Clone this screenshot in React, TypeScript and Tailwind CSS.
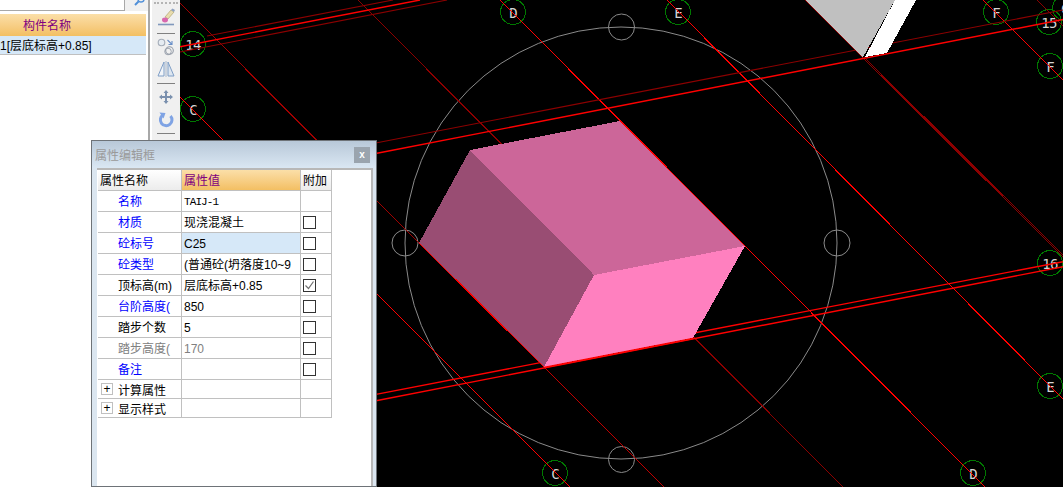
import React from "react";

const cjk = "[font-family:'Liberation_Sans','Noto_Sans_CJK_SC',sans-serif]";

type Row = { name: string; value?: React.ReactNode; color: string; valueClass?: string; check?: "none" | "empty" | "checked"; selected?: boolean };

const rows: Row[] = [
  { name: "名称", value: "TAIJ-1", color: "text-[#0000ff]", valueClass: "[font-family:'Liberation_Mono',monospace] text-[11px] tracking-[-0.9px]", check: "none" },
  { name: "材质", value: "现浇混凝土", color: "text-[#0000ff]", check: "empty" },
  { name: "砼标号", value: "C25", color: "text-[#0000ff]", check: "empty", selected: true },
  { name: "砼类型", value: "(普通砼(坍落度10~9", color: "text-[#0000ff]", check: "empty" },
  { name: "顶标高(m)", value: "层底标高+0.85", color: "text-black", check: "checked" },
  { name: "台阶高度(", value: "850", color: "text-[#0000ff]", check: "empty" },
  { name: "踏步个数", value: "5", color: "text-black", check: "empty" },
  { name: "踏步高度(", value: "170", color: "text-[#808080]", valueClass: "text-[#808080]", check: "empty" },
  { name: "备注", value: "", color: "text-[#0000ff]", check: "empty" },
];

function Check({ on }: { on?: boolean }) {
  return (
    <span className="ml-[2px] flex h-[13px] w-[13px] items-center justify-center border border-[#333333] bg-white">
      {on && (
        <svg width="11" height="11" viewBox="0 0 11 11">
          <path d="M1.5 5.5 L4.5 8.5 L9.5 1.5" fill="none" stroke="#707070" strokeWidth="1.2" />
        </svg>
      )}
    </span>
  );
}

function Labels() {
  const items: [number, number, string][] = [
    [193, 44, "14"],
    [193, 109, "C"],
    [513, 12, "D"],
    [678, 12, "E"],
    [996, 12, "F"],
    [1065, 8, "G"],
    [1049, 22, "15"],
    [1050, 66, "F"],
    [1050, 263, "16"],
    [1050, 386, "E"],
    [973, 473, "D"],
    [555, 473, "C"],
  ];
  return (
    <>
      {items.map(([x, y, t]) => (
        <g key={t + x}>
          <circle cx={x} cy={y} r="12.5" fill="none" stroke="#007800" strokeWidth="1" />
          <text x={x} y={y + 5.5} textAnchor="middle" fontFamily="'DejaVu Sans Mono', monospace" fontSize="14" letterSpacing="-0.8" fill="#d4d4d4">
            {t}
          </text>
        </g>
      ))}
    </>
  );
}

function Canvas() {
  const bright = "#ff0000";
  const dark = "#8c0000";
  return (
    <svg className="block h-full w-full bg-black" viewBox="180 0 883 487" shapeRendering="crispEdges">
      <Labels />
      {/* work circle */}
      <g fill="none" stroke="#8a8a8a" strokeWidth="1" shapeRendering="auto">
        <circle cx="621" cy="243" r="216" />
        <circle cx="621.5" cy="27" r="13" />
        <circle cx="405" cy="243" r="13" />
        <circle cx="837" cy="243" r="13" />
        <circle cx="621.5" cy="459.5" r="13" />
      </g>
      {/* descending grid lines */}
      <line x1="177" y1="0" x2="419" y2="243" stroke="#a00000" />
      <line x1="544" y1="367" x2="664" y2="487" stroke="#c00000" />
      <line x1="358" y1="0" x2="843" y2="487" stroke={dark} />
      <line x1="500" y1="0" x2="985" y2="487" stroke={bright} />
      <line x1="667" y1="0" x2="1063" y2="399" stroke={bright} />
      <line x1="180" y1="97" x2="570" y2="487" stroke={bright} />
      <line x1="983" y1="0" x2="1063" y2="80" stroke={bright} />
      <line x1="1037" y1="0" x2="1063" y2="26" stroke={dark} />
      <line x1="805" y1="0" x2="1063" y2="257" stroke={dark} />
      <line x1="864" y1="57" x2="1063" y2="255" stroke={dark} />
      {/* rising grid lines */}
      <g shapeRendering="auto" stroke={dark} strokeWidth="1.1">
        <line x1="207" y1="36" x2="393" y2="0" />
        <line x1="180" y1="52" x2="447" y2="0" />
        <line x1="377" y1="142.7" x2="1063" y2="10" />
      </g>
      <g shapeRendering="auto" stroke={bright} strokeWidth="1.4">
        <line x1="180" y1="46.7" x2="420" y2="0" />
        <line x1="377" y1="153.3" x2="1063" y2="19.5" />
        <line x1="376" y1="394.4" x2="1063" y2="261.7" />
        <line x1="376" y1="400.8" x2="1063" y2="266.7" />
      </g>
      {/* wedge */}
      <polygon points="805,0 895,0 863,57" fill="#c0c0c0" />
      <polygon points="895,0 916,0 887,53 865,57" fill="#ffffff" />
      {/* pink solid */}
      <polygon points="470,150 620,121 745,246 594,275" fill="#cc6699" />
      <polygon points="470,150 594,275 544,367 419,243" fill="#994d73" />
      <polygon points="594,275 745,246 693,338 544,367" fill="#ff80bf" />
      <line x1="620" y1="121" x2="745" y2="246" stroke={bright} />
      <line x1="419" y1="243" x2="544" y2="367" stroke={bright} />
      <line x1="544" y1="367.5" x2="693" y2="338.5" stroke={bright} strokeWidth="1.4" shapeRendering="auto" />
    </svg>
  );
}

function ToolIcons() {
  return (
    <div className="flex flex-col items-center">
      <div className="mt-[2px] h-0 w-[24px] border-t-2 border-dotted border-[#b4b4b4]" />
      <svg className="mt-[4px]" width="20" height="19" viewBox="0 0 20 19">
        <path d="M9 9 L15 2 L18 4 L12 11 Z" fill="#e8dcae" stroke="#a89a60" strokeWidth="0.6" />
        <path d="M15 2 L18 4 L19 2 L16.5 0.5 Z" fill="#8ea2c2" />
        <ellipse cx="9" cy="12" rx="3" ry="2.4" fill="#d868ae" />
        <path d="M2 16.5 H18" stroke="#8098bc" strokeWidth="1.6" />
      </svg>
      <div className="mt-[6px] h-px w-[18px] bg-[#808080]" />
      <svg className="mt-[4px]" width="18" height="18" viewBox="0 0 18 18" fill="none">
        <circle cx="4.5" cy="4.5" r="3.3" stroke="#a4acb8" strokeWidth="1.1" fill="#e6ecf2" />
        <circle cx="12.5" cy="12.5" r="3.8" stroke="#949ca8" strokeWidth="1.1" />
        <circle cx="11" cy="13.5" r="3.3" stroke="#949ca8" strokeWidth="0.9" />
        <path d="M10.5 2 L15 6.5 M15 3 V6.5 H11.5" stroke="#6a90c8" strokeWidth="1.1" />
      </svg>
      <svg className="mt-[4px]" width="18" height="18" viewBox="0 0 18 18" fill="none" stroke="#7f9ec6" strokeWidth="1">
        <path d="M9 1 V17" stroke="#a8b8cc" />
        <path d="M7 2 L1 16 H7 Z" fill="#f2f5f9" />
        <path d="M11 2 L17 16 H11 Z" fill="#dde6f0" />
      </svg>
      <div className="mt-[5px] h-px w-[18px] bg-[#808080]" />
      <svg className="mt-[5px]" width="16" height="16" viewBox="0 0 16 16" fill="#7a90ae">
        <path d="M8 1 L10.5 4 H9 V7 H12 V5.5 L15 8 L12 10.5 V9 H9 V12 H10.5 L8 15 L5.5 12 H7 V9 H4 V10.5 L1 8 L4 5.5 V7 H7 V4 H5.5 Z" />
      </svg>
      <svg className="mt-[6px]" width="16" height="17" viewBox="0 0 16 17" fill="none">
        <path d="M5 4 A5.8 5.8 0 1 0 12.5 5" stroke="#7fa3e4" strokeWidth="3" />
        <path d="M1.5 1.5 L7.5 2 L5.5 7.5 Z" fill="#7fa3e4" />
      </svg>
      <div className="mt-[5px] h-px w-[18px] bg-[#808080]" />
    </div>
  );
}

function PropertyDialog() {
  const cell = "flex items-center overflow-hidden whitespace-nowrap border-b border-r border-[#c0c0c0]";
  return (
    <div className={`absolute left-[91px] top-[140px] flex h-[347px] w-[286px] flex-col border border-[#6e7378] bg-[#dbe6f0] ${cjk}`}>
      <div className="flex h-[27px] shrink-0 items-center justify-between bg-gradient-to-b from-[#b8c8d8] to-[#dae7f3] pl-[3px] pr-[6px]">
        <span className="pt-[2px] text-[12px] text-[#9a9a9a]">属性编辑框</span>
        <span className="flex h-[16px] w-[16px] items-center justify-center bg-[#9aa4ae] text-[10px] font-bold leading-none text-white">x</span>
      </div>
      <div className="ml-[5px] mr-[3px] flex-1 border-r-2 border-t-2 border-[#b8b8b8] bg-white pl-[1px]">
        <div className="grid w-[234px] grid-cols-[84px_119px_31px] text-[12px] text-black">
          <div className={`${cell} h-[21px] bg-gradient-to-b from-white to-[#ececec] pl-[2px] pt-[2px]`}>属性名称</div>
          <div className={`${cell} h-[21px] bg-gradient-to-b from-[#fbdfa8] to-[#f3bf62] pl-[2px] pt-[2px] text-[#800080]`}>属性值</div>
          <div className={`${cell} h-[21px] bg-gradient-to-b from-white to-[#ececec] pl-[2px] pt-[2px]`}>附加</div>
          {rows.map((r) => (
            <React.Fragment key={r.name}>
              <div className={`${cell} h-[21px] pl-[20px] pt-[2px] ${r.color}`}>{r.name}</div>
              <div className={`${cell} h-[21px] pl-[2px] pt-[2px] ${r.selected ? "bg-[#d6e8f8]" : ""} ${r.valueClass ?? "text-[12px]"}`}>{r.value}</div>
              <div className={`${cell} h-[21px]`}>
                {r.check === "empty" && <Check />}
                {r.check === "checked" && <Check on />}
              </div>
            </React.Fragment>
          ))}
          {["计算属性", "显示样式"].map((t) => (
            <React.Fragment key={t}>
              <div className={`${cell} h-[19px] pl-[3px]`}>
                <span className="mr-[5px] flex h-[12px] w-[12px] items-center justify-center border border-[#c0c0c0] text-[12px] leading-none">+</span>
                <span className="pt-[3px]">{t}</span>
              </div>
              <div className={`${cell} h-[19px]`} />
              <div className={`${cell} h-[19px]`} />
            </React.Fragment>
          ))}
        </div>
      </div>
    </div>
  );
}

export default function App() {
  return (
    <div className="relative flex h-[487px] w-[1063px] overflow-hidden bg-white">
      <aside className={`flex w-[150px] shrink-0 flex-col border-r-2 border-[#a8a8a8] bg-white ${cjk}`}>
        <div className="flex h-[14px] shrink-0">
          <div className="h-[11px] w-[125px] border-b border-r border-[#a8a8a8] bg-white" />
          <div className="flex h-[11px] flex-1 justify-end overflow-hidden bg-[#f0f0f0] pr-[3px]">
            <svg className="-mt-[5px]" width="11" height="11" viewBox="0 0 11 11" fill="none">
              <circle cx="7" cy="4" r="3" stroke="#4f8fd8" strokeWidth="1.4" />
              <path d="M4.5 6.5 L1 10" stroke="#4f8fd8" strokeWidth="2" />
            </svg>
          </div>
        </div>
        <div className="mr-[2px] flex h-[22px] shrink-0 items-center bg-gradient-to-b from-[#fbdfa8] to-[#f3bf62] pl-[23px] pt-[2px] text-[12px] text-[#800080]">构件名称</div>
        <div className="mr-[2px] flex h-[19px] shrink-0 items-center overflow-hidden whitespace-nowrap border-b border-[#c0c0c0] bg-[#d6e8f8] pt-[2px] text-[12px] text-black">
          1[层底标高+0.85]
        </div>
      </aside>
      <div className="w-[30px] shrink-0 border-l-2 border-white bg-[#f0f0f0]">
        <ToolIcons />
      </div>
      <main className="min-w-0 flex-1 bg-black">
        <Canvas />
      </main>
      <PropertyDialog />
    </div>
  );
}
